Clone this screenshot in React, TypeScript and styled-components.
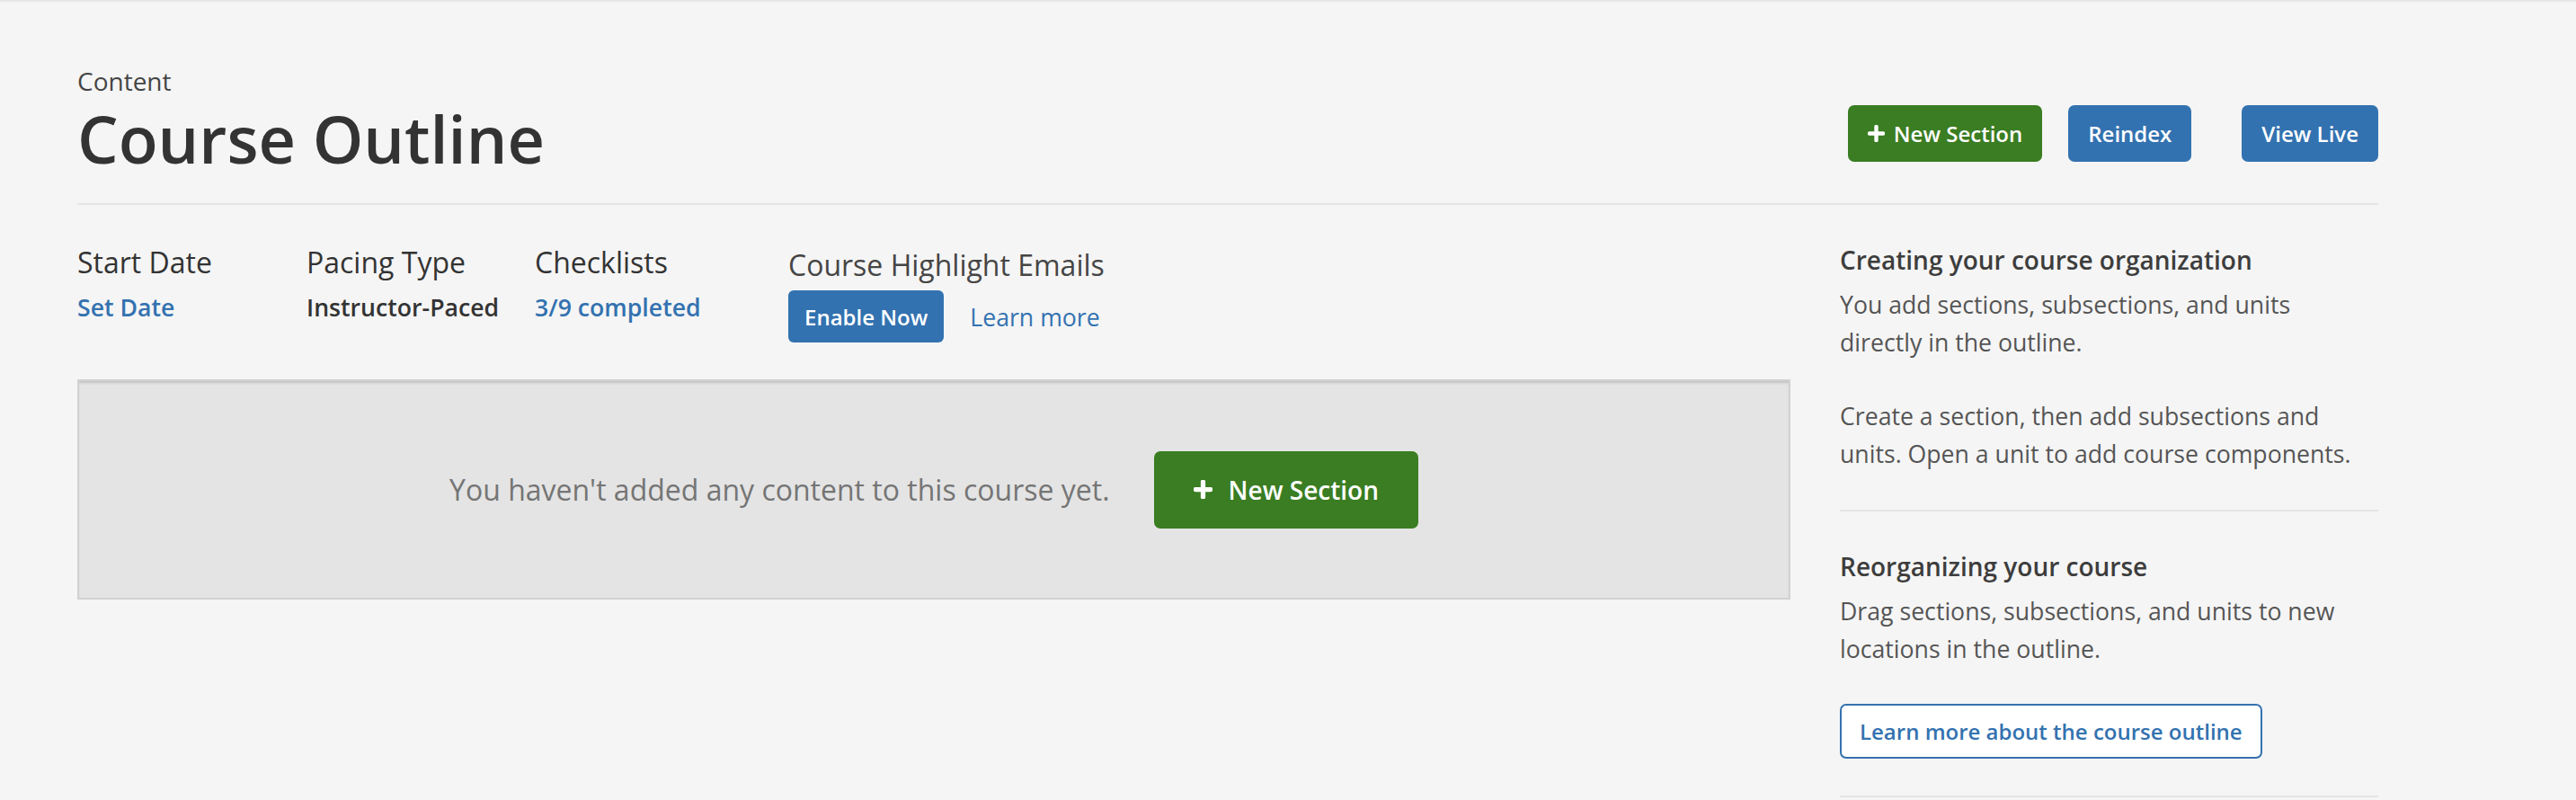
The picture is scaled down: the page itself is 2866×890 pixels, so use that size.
import React from "react";
import styled, { createGlobalStyle } from "styled-components";

const GlobalStyle = createGlobalStyle`
  html, body {
    margin: 0;
    padding: 0;
    background: #f5f5f5;
    font-family: "Open Sans", "Noto Sans", sans-serif;
    color: #333;
  }
  * { box-sizing: border-box; }
`;

const BLUE = "#3372b0";
const GREEN = "#3a7d22";

const TopShadow = styled.div`
  height: 3px;
  background: linear-gradient(#e2e2e2, #f5f5f5);
`;

const Container = styled.div`
  width: 2646px;
  padding: 66px 0 0 86px;
`;

const Header = styled.header`
  display: flex;
  justify-content: space-between;
  align-items: flex-start;
  padding-bottom: 29px;
  border-bottom: 2px solid #e4e4e4;
`;

const TitleBlock = styled.div`
  display: flex;
  flex-direction: column;
`;

const SubTitle = styled.span`
  font-size: 28px;
  line-height: 42px;
  color: #454545;
`;

const Title = styled.h1`
  margin: 0;
  font-size: 72px;
  line-height: 86px;
  font-weight: 600;
  color: #333;
`;

const HeaderActions = styled.div`
  display: flex;
  margin-top: 48px;
`;

const Button = styled.button<{ $variant: "green" | "blue"; $gap?: number }>`
  display: inline-flex;
  align-items: center;
  justify-content: center;
  gap: 10px;
  height: 63px;
  padding: 0 22px;
  margin-left: ${(p) => p.$gap ?? 0}px;
  border: none;
  border-radius: 7px;
  background: ${(p) => (p.$variant === "green" ? GREEN : BLUE)};
  color: #fff;
  font-family: inherit;
  font-size: 24px;
  font-weight: 600;
  cursor: pointer;
`;

const Body = styled.div`
  display: grid;
  grid-template-columns: 1906px 599px;
  column-gap: 55px;
  padding-top: 40px;
`;

const Main = styled.div`
  display: flex;
  flex-direction: column;
`;

const Stats = styled.div`
  display: grid;
  grid-template-columns: 255px 254px 282px auto;
  margin-bottom: 41px;
`;

const Stat = styled.div`
  display: flex;
  flex-direction: column;
`;

const StatLabel = styled.h3<{ $light?: boolean }>`
  margin: 0 0 3px;
  font-size: 32px;
  line-height: 48px;
  font-weight: 400;
  color: ${(p) => (p.$light ? "#454545" : "#333")};
  padding-top: ${(p) => (p.$light ? 3 : 0)}px;
`;

const StatValue = styled.span<{ $link?: boolean }>`
  margin-top: 2px;
  font-size: 26.67px;
  line-height: 42px;
  font-weight: 600;
  color: ${(p) => (p.$link ? BLUE : "#333")};
`;

const HighlightRow = styled.div`
  display: flex;
  align-items: center;
  gap: 29px;
  margin-top: 1px;
`;

const SmallButton = styled.button`
  height: 58px;
  padding: 0 18px;
  border: none;
  border-radius: 6px;
  background: ${BLUE};
  color: #fff;
  font-family: inherit;
  font-size: 24px;
  font-weight: 600;
`;

const TextLink = styled.a`
  font-size: 26.67px;
  color: ${BLUE};
  text-decoration: none;
`;

const EmptyBox = styled.div`
  display: flex;
  align-items: center;
  justify-content: center;
  gap: 49px;
  height: 245px;
  background: #e4e4e4;
  border: 2px solid #d2d2d2;
  box-shadow: inset 0 3px 3px -1px rgba(0, 0, 0, 0.15);
`;

const EmptyText = styled.p`
  margin: 0;
  font-size: 32px;
  color: #757575;
`;

const BigButton = styled.button`
  display: inline-flex;
  align-items: center;
  gap: 18px;
  height: 86px;
  padding: 0 44px;
  border: none;
  border-radius: 7px;
  background: ${GREEN};
  color: #fff;
  font-family: inherit;
  font-size: 28px;
  font-weight: 600;
`;

const Sidebar = styled.aside`
  display: flex;
  flex-direction: column;
`;

const SideSection = styled.section<{ $first?: boolean }>`
  padding: ${(p) => (p.$first ? 0 : 40)}px 0 41px;
  border-bottom: 2px solid #e4e4e4;
`;

const SideTitle = styled.h4`
  margin: 0 0 8px;
  font-size: 28px;
  line-height: 42px;
  font-weight: 600;
  color: #3d3d3d;
`;

const SideText = styled.p`
  margin: 0;
  font-size: 26.67px;
  line-height: 42px;
  color: #555;
  & + & {
    margin-top: 40px;
  }
`;

const OutlineButton = styled.button`
  margin-top: 40px;
  height: 61px;
  padding: 0 20px;
  border: 2px solid ${BLUE};
  border-radius: 7px;
  background: #fff;
  color: ${BLUE};
  font-family: inherit;
  font-size: 24px;
  font-weight: 600;
`;

const PlusIcon = ({ size, stroke }: { size: number; stroke: number }) => (
  <svg width={size} height={size} viewBox="0 0 20 20" aria-hidden="true">
    <path
      d="M10 2 V18 M2 10 H18"
      stroke="#fff"
      strokeWidth={stroke}
      strokeLinecap="round"
      fill="none"
    />
  </svg>
);

export default function App() {
  return (
    <>
      <GlobalStyle />
      <TopShadow />
      <Container>
        <Header>
          <TitleBlock>
            <SubTitle>Content</SubTitle>
            <Title>Course Outline</Title>
          </TitleBlock>
          <HeaderActions>
            <Button $variant="green">
              <PlusIcon size={19} stroke={4.6} />
              New Section
            </Button>
            <Button $variant="blue" $gap={29}>
              Reindex
            </Button>
            <Button $variant="blue" $gap={56}>
              View Live
            </Button>
          </HeaderActions>
        </Header>
        <Body>
          <Main>
            <Stats>
              <Stat>
                <StatLabel>Start Date</StatLabel>
                <StatValue $link>Set Date</StatValue>
              </Stat>
              <Stat>
                <StatLabel>Pacing Type</StatLabel>
                <StatValue>Instructor-Paced</StatValue>
              </Stat>
              <Stat>
                <StatLabel>Checklists</StatLabel>
                <StatValue $link>3/9 completed</StatValue>
              </Stat>
              <Stat>
                <StatLabel $light>Course Highlight Emails</StatLabel>
                <HighlightRow>
                  <SmallButton>Enable Now</SmallButton>
                  <TextLink href="#">Learn more</TextLink>
                </HighlightRow>
              </Stat>
            </Stats>
            <EmptyBox>
              <EmptyText>You haven't added any content to this course yet.</EmptyText>
              <BigButton>
                <PlusIcon size={21} stroke={5} />
                New Section
              </BigButton>
            </EmptyBox>
          </Main>
          <Sidebar>
            <SideSection $first>
              <SideTitle>Creating your course organization</SideTitle>
              <SideText>
                You add sections, subsections, and units directly in the outline.
              </SideText>
              <SideText>
                Create a section, then add subsections and units. Open a unit to add
                course components.
              </SideText>
            </SideSection>
            <SideSection>
              <SideTitle>Reorganizing your course</SideTitle>
              <SideText>
                Drag sections, subsections, and units to new locations in the outline.
              </SideText>
              <OutlineButton>Learn more about the course outline</OutlineButton>
            </SideSection>
          </Sidebar>
        </Body>
      </Container>
    </>
  );
}
